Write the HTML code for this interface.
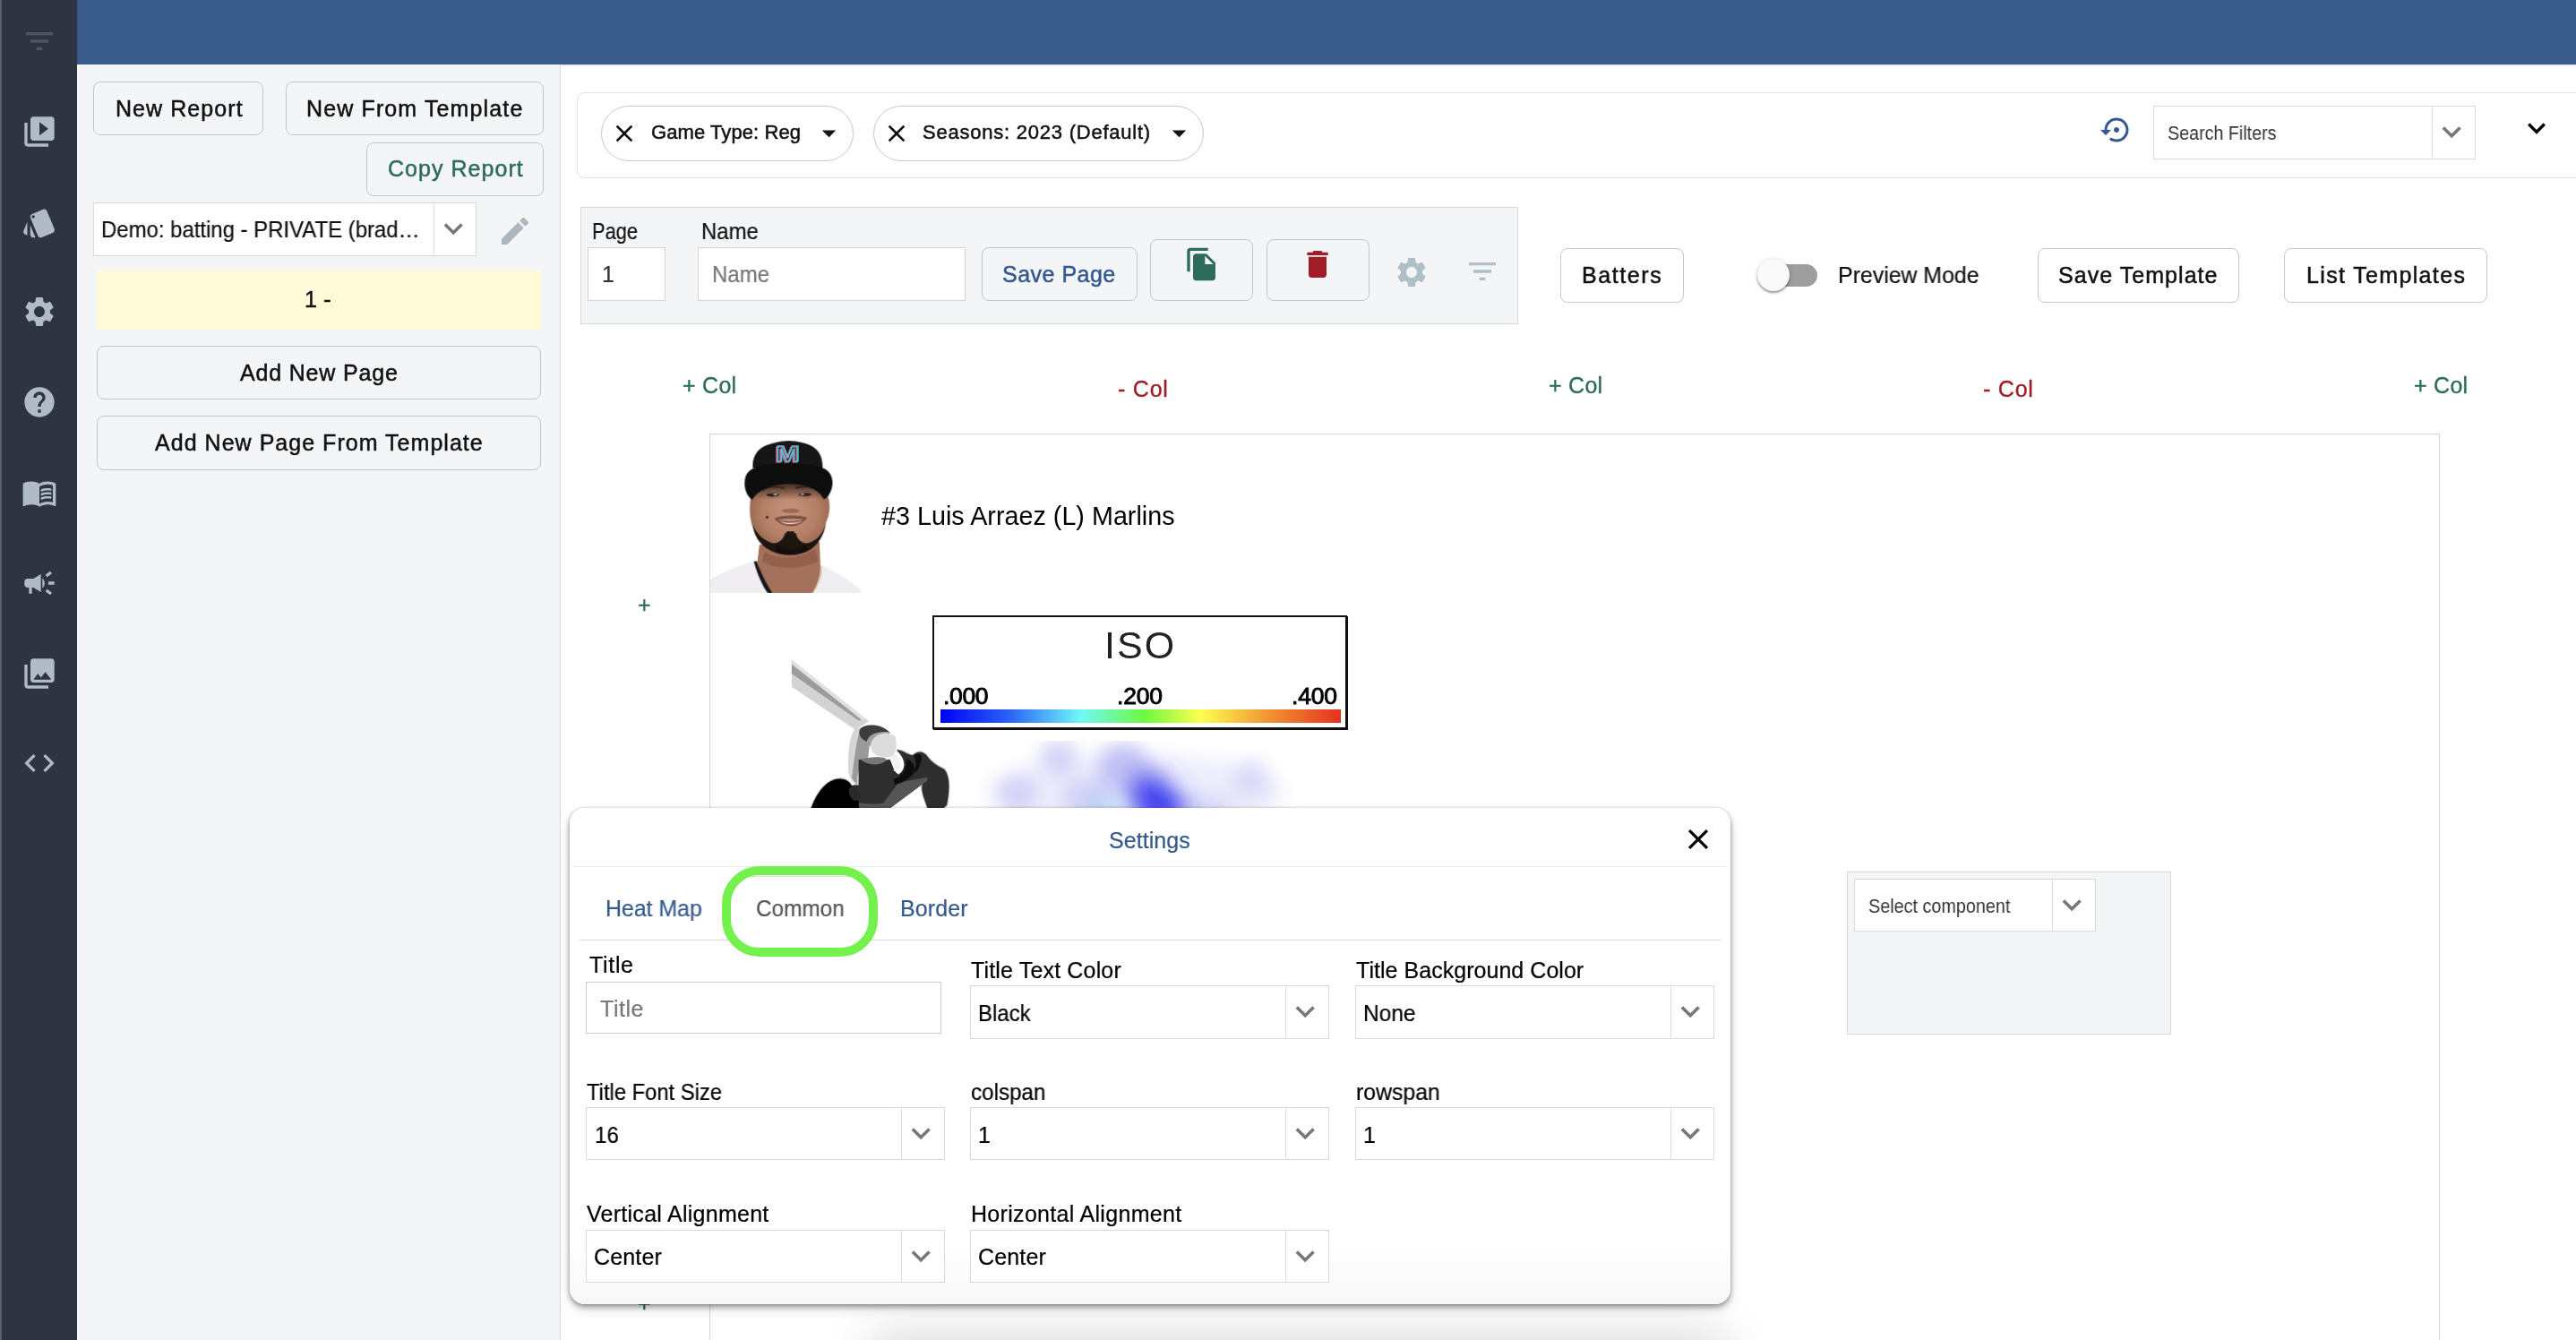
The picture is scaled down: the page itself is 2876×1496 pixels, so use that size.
<!DOCTYPE html>
<html lang="en"><head><meta charset="utf-8"><title>Report Builder</title>
<style>
html,body{margin:0;padding:0;background:#fff;}
body{width:2876px;height:1496px;overflow:hidden;position:relative;font-family:'Liberation Sans',sans-serif;}
.a{position:absolute;box-sizing:border-box;display:block}
.t{position:absolute;white-space:pre;line-height:1;font-family:'Liberation Sans',sans-serif;transform-origin:0 50%;will-change:transform}
.btn{border:1px solid #c6c6c6;border-radius:8px}
.sel{background:#fff;border:1px solid #d9d9d9}
</style></head>
<body>
<div class="a" style="left:0px;top:0px;width:86px;height:1496px;background:#2e3540"></div>
<div class="a" style="left:0px;top:0px;width:2px;height:1496px;background:#5a606b"></div>
<div class="a" style="left:86px;top:0px;width:2790px;height:72px;background:#385b8c;box-shadow:0 1px 2px rgba(0,0,0,.16)"></div>
<div class="a" style="left:86px;top:72px;width:539px;height:1424px;background:#f4f5f7;border-right:1px solid #d9d9d9;box-sizing:content-box"></div>
<svg class="a" style="left:24.4px;top:25.5px" width="40" height="40" viewBox="0 0 24 24"><path fill="#50565f" d="M10 18h4v-2h-4v2zM3 6v2h18V6H3zm3 7h12v-2H6v2z"/></svg>
<svg class="a" style="left:24.4px;top:126.5px" width="40" height="40" viewBox="0 0 24 24"><path fill="#b1bbc5" d="M4 6H2v14c0 1.1.9 2 2 2h14v-2H4V6zm16-4H8c-1.1 0-2 .9-2 2v12c0 1.1.9 2 2 2h12c1.1 0 2-.9 2-2V4c0-1.1-.9-2-2-2zm-8 12.5v-9l6 4.5-6 4.5z"/></svg>
<svg class="a" style="left:24.4px;top:229.0px" width="40" height="40" viewBox="0 0 24 24"><path fill="#b1bbc5" d="M2.53 19.65l1.34.56v-9.03l-2.43 5.86c-.41 1.02.08 2.19 1.09 2.61zm19.5-3.7L17.07 3.98c-.31-.75-1.04-1.21-1.81-1.23-.26 0-.53.04-.79.15L7.1 5.95c-.75.31-1.21 1.03-1.23 1.8-.01.27.04.54.15.8l4.96 11.97c.31.76 1.05 1.22 1.83 1.23.26 0 .52-.05.77-.15l7.36-3.05c1.02-.42 1.51-1.59 1.09-2.6zM7.88 8.75c-.55 0-1-.45-1-1s.45-1 1-1 1 .45 1 1-.45 1-1 1zm-2 11c0 1.1.9 2 2 2h1.45l-3.45-8.34v6.34z"/></svg>
<svg class="a" style="left:24.4px;top:328.0px" width="40" height="40" viewBox="0 0 24 24"><path fill="#b1bbc5" d="M19.14 12.94c.04-.3.06-.61.06-.94 0-.32-.02-.64-.07-.94l2.030-1.580c.18-.14.23-.41.12-.61l-1.920-3.320c-.12-.22-.37-.29-.59-.22l-2.390.960c-.5-.38-1.030-.7-1.620-.94l-.36-2.540c-.04-.24-.24-.41-.48-.41h-3.840c-.24 0-.43.17-.47.41l-.36 2.540c-.59.24-1.130.57-1.620.94l-2.390-.960c-.22-.08-.47 0-.59.22L2.740 8.870c-.12.21-.08.47.12.61l2.030 1.580c-.05.3-.09.63-.09.94s.02.64.07.94l-2.030 1.580c-.18.14-.23.41-.12.61l1.920 3.320c.12.22.37.29.59.22l2.390-.960c.5.38 1.030.7 1.620.94l.36 2.540c.05.24.24.41.48.41h3.840c.24 0 .44-.17.47-.41l.36-2.540c.59-.24 1.130-.56 1.620-.94l2.390.960c.22.08.47 0 .59-.22l1.920-3.320c.12-.22.07-.47-.12-.61l-2.010-1.580zM12 15.600c-1.980 0-3.600-1.620-3.600-3.600s1.620-3.600 3.600-3.600 3.600 1.620 3.600 3.600-1.620 3.600-3.600 3.600z"/></svg>
<svg class="a" style="left:24.4px;top:429.0px" width="40" height="40" viewBox="0 0 24 24"><path fill="#b1bbc5" d="M12 2C6.48 2 2 6.48 2 12s4.48 10 10 10 10-4.48 10-10S17.52 2 12 2zm1 17h-2v-2h2v2zm2.07-7.75l-.9.92C13.45 12.9 13 13.5 13 15h-2v-.5c0-1.1.45-2.1 1.17-2.83l1.24-1.26c.37-.36.59-.86.59-1.41 0-1.1-.9-2-2-2s-2 .9-2 2H8c0-2.21 1.79-4 4-4s4 1.79 4 4c0 .88-.36 1.68-.93 2.250z"/></svg>
<svg class="a" style="left:24.4px;top:529.8px" width="40" height="40" viewBox="0 0 24 24"><path fill="#b1bbc5" d="M21 5c-1.110-.35-2.330-.5-3.500-.5-1.950 0-4.050.4-5.500 1.500-1.450-1.100-3.550-1.500-5.500-1.500S2.450 4.900 1 6v14.650c0 .25.25.5.5.5.1 0 .15-.05.25-.05C3.100 20.450 5.050 20 6.500 20c1.950 0 4.050.4 5.500 1.500 1.350-.85 3.800-1.500 5.500-1.500 1.650 0 3.350.3 4.750 1.050.1.05.15.05.25.05.25 0 .5-.25.5-.5V6c-.6-.45-1.250-.75-2-1zm0 13.500c-1.100-.35-2.300-.5-3.500-.5-1.700 0-4.150.65-5.500 1.500V8c1.350-.85 3.800-1.500 5.500-1.500 1.200 0 2.400.15 3.500.5v11.500zM17.500 10.500c.88 0 1.730.09 2.500.26V9.240c-.79-.15-1.640-.24-2.500-.24-1.700 0-3.240.29-4.500.83v1.660c1.130-.64 2.700-.99 4.500-.99zM13 12.490v1.660c1.130-.64 2.700-.99 4.500-.99.88 0 1.730.09 2.500.26V11.900c-.79-.15-1.640-.24-2.500-.24-1.700 0-3.240.3-4.500.83zM17.500 14.330c-1.700 0-3.240.29-4.500.83v1.660c1.130-.64 2.700-.99 4.500-.99.88 0 1.730.09 2.500.26v-1.520c-.79-.16-1.640-.24-2.500-.24z"/></svg>
<svg class="a" style="left:24.4px;top:631.0px" width="40" height="40" viewBox="0 0 24 24"><path fill="#b1bbc5" d="M18 11v2h4v-2h-4zm-2 6.610c.96.71 2.210 1.650 3.200 2.390.4-.53.8-1.070 1.200-1.600-.99-.74-2.240-1.680-3.200-2.400-.4.54-.8 1.080-1.200 1.610zM20.400 5.600c-.4-.53-.8-1.070-1.200-1.600-.99.74-2.240 1.680-3.200 2.400.4.53.8 1.070 1.200 1.600.96-.72 2.210-1.650 3.200-2.400zM4 9c-1.100 0-2 .9-2 2v2c0 1.100.9 2 2 2h1v4h2v-4h1l5 3V6L8 9H4zm11.500 3c0-1.330-.58-2.530-1.500-3.350v6.690c.92-.81 1.500-2.010 1.500-3.340z"/></svg>
<svg class="a" style="left:24.4px;top:731.5px" width="40" height="40" viewBox="0 0 24 24"><path fill="#b1bbc5" d="M22 16V4c0-1.100-.9-2-2-2H8c-1.100 0-2 .9-2 2v12c0 1.100.9 2 2 2h12c1.100 0 2-.9 2-2zm-11-4l2.030 2.710L16 11l4 5H8l3-4zM2 6v14c0 1.100.9 2 2 2h14v-2H4V6H2z"/></svg>
<svg class="a" style="left:24.4px;top:832.0px" width="40" height="40" viewBox="0 0 24 24"><path fill="#b1bbc5" d="M9.4 16.6L4.8 12l4.6-4.6L8 6l-6 6 6 6 1.400-1.400zm5.200 0l4.600-4.600-4.600-4.600L16 6l6 6-6 6-1.400-1.400z"/></svg>
<div class="a btn" style="left:104px;top:91px;width:190px;height:60px;background:transparent"></div>
<div class="a btn" style="left:319px;top:91px;width:288px;height:60px;background:transparent"></div>
<div class="a btn" style="left:409px;top:159px;width:198px;height:60px;background:transparent"></div>
<div class="a sel" style="left:104px;top:226px;width:428px;height:60px;"></div><div class="a" style="left:483.5px;top:227px;width:1px;height:58px;background:#ddd"></div><svg class="a" style="left:484.8px;top:234.4px" width="42.4" height="42.4" viewBox="0 0 24 24"><path fill="#777" d="M16.590 8.590L12 13.170 7.410 8.590 6 10l6 6 6-6z"/></svg>
<svg class="a" style="left:555.0px;top:238.0px" width="40" height="40" viewBox="0 0 24 24"><path fill="#aeb7c0" d="M3 17.250V21h3.750L17.810 9.940l-3.750-3.750L3 17.250zM20.710 7.040c.39-.39.39-1.020 0-1.410l-2.340-2.340c-.39-.39-1.020-.39-1.410 0l-1.830 1.830 3.750 3.750 1.830-1.830z"/></svg>
<div class="a" style="left:108px;top:302px;width:496px;height:66px;background:#fffbd8"></div>
<div class="a btn" style="left:108px;top:386px;width:496px;height:60px;background:transparent"></div>
<div class="a btn" style="left:108px;top:464px;width:496px;height:61px;background:transparent"></div>
<div class="a" style="left:644px;top:103px;width:2300px;height:96px;border:1px solid #e4e4e4;border-radius:8px"></div>
<div class="a" style="left:671px;top:118px;width:281.5px;height:62px;border:1px solid #c9c9c9;border-radius:31px"></div>
<div class="a" style="left:975px;top:118px;width:368.6px;height:62px;border:1px solid #c9c9c9;border-radius:31px"></div>
<svg class="a" style="left:681.0px;top:133.0px" width="32" height="32" viewBox="0 0 24 24"><path fill="#111" d="M19 6.410L17.590 5 12 10.590 6.410 5 5 6.410 10.590 12 5 17.590 6.410 19 12 13.410 17.590 19 19 17.590 13.410 12z"/></svg>
<svg class="a" style="left:985.2px;top:133.0px" width="32" height="32" viewBox="0 0 24 24"><path fill="#111" d="M19 6.410L17.590 5 12 10.590 6.410 5 5 6.410 10.590 12 5 17.590 6.410 19 12 13.410 17.590 19 19 17.590 13.410 12z"/></svg>
<svg class="a" style="left:906.8px;top:129.7px" width="37" height="37" viewBox="0 0 24 24"><path fill="#111" d="M7 10l5 5 5-5z"/></svg>
<svg class="a" style="left:1298.0px;top:129.7px" width="37" height="37" viewBox="0 0 24 24"><path fill="#111" d="M7 10l5 5 5-5z"/></svg>
<svg class="a" style="left:2344.9px;top:127.0px" width="36" height="36" viewBox="0 0 24 24"><path fill="#34598c" d="M14 12c0-1.100-.9-2-2-2s-2 .9-2 2 .9 2 2 2 2-.9 2-2zm-2-9c-4.970 0-9 4.030-9 9H0l4 4 4-4H5c0-3.870 3.130-7 7-7s7 3.130 7 7-3.130 7-7 7c-1.510 0-2.910-.49-4.060-1.300l-1.420 1.440C8.040 20.300 9.940 21 12 21c4.970 0 9-4.030 9-9s-4.030-9-9-9z"/></svg>
<div class="a sel" style="left:2404px;top:118px;width:360px;height:60px;"></div><div class="a" style="left:2715.4px;top:119px;width:1px;height:58px;background:#ddd"></div><svg class="a" style="left:2716.3px;top:126.4px" width="42.4" height="42.4" viewBox="0 0 24 24"><path fill="#777" d="M16.590 8.590L12 13.170 7.410 8.590 6 10l6 6 6-6z"/></svg>
<svg class="a" style="left:2812.0px;top:123.2px" width="40" height="40" viewBox="0 0 24 24"><path fill="#000" d="M16.590 8.590L12 13.170 7.410 8.590 6 10l6 6 6-6z"/></svg>
<div class="a" style="left:648px;top:231px;width:1047px;height:131px;background:#f4f5f7;border:1px solid #d3d7de"></div>
<div class="a" style="left:656px;top:276px;width:87px;height:60px;background:#fff;border:1px solid #d4d4d4"></div>
<div class="a" style="left:779px;top:276px;width:299px;height:60px;background:#fff;border:1px solid #d4d4d4"></div>
<div class="a btn" style="left:1096px;top:275.5px;width:173.5px;height:60.0px;background:transparent"></div>
<div class="a btn" style="left:1284px;top:267px;width:114.59999999999991px;height:69px;background:transparent"></div>
<div class="a btn" style="left:1414px;top:267px;width:114.79999999999995px;height:69px;background:transparent"></div>
<svg class="a" style="left:1322.1px;top:275.3px" width="40" height="40" viewBox="0 0 24 24"><path fill="#2d6b5c" d="M16 1H4c-1.100 0-2 .9-2 2v14h2V3h12V1zm-1 4l6 6v10c0 1.100-.9 2-2 2H7.990C6.890 23 6 22.100 6 21l.010-14c0-1.100.89-2 1.990-2h7zm-1 7h5.500L14 6.500V12z"/></svg>
<svg class="a" style="left:1451.4px;top:275.0px" width="40" height="40" viewBox="0 0 24 24"><path fill="#a01c26" d="M6 19c0 1.100.9 2 2 2h8c1.100 0 2-.9 2-2V7H6v12zM19 4h-3.500l-1-1h-5l-1 1H5v2h14V4z"/></svg>
<svg class="a" style="left:1555.5px;top:283.5px" width="40" height="40" viewBox="0 0 24 24"><path fill="#b0bec5" d="M19.14 12.94c.04-.3.06-.61.06-.94 0-.32-.02-.64-.07-.94l2.030-1.580c.18-.14.23-.41.12-.61l-1.920-3.320c-.12-.22-.37-.29-.59-.22l-2.390.960c-.5-.38-1.030-.7-1.620-.94l-.36-2.540c-.04-.24-.24-.41-.48-.41h-3.840c-.24 0-.43.17-.47.41l-.36 2.540c-.59.24-1.130.57-1.620.94l-2.390-.960c-.22-.08-.47 0-.59.22L2.740 8.870c-.12.21-.08.47.12.61l2.030 1.580c-.05.3-.09.63-.09.94s.02.64.07.94l-2.030 1.580c-.18.14-.23.41-.12.61l1.920 3.320c.12.22.37.29.59.22l2.390-.960c.5.38 1.030.7 1.620.94l.36 2.540c.05.24.24.41.48.41h3.840c.24 0 .44-.17.47-.41l.36-2.540c.59-.24 1.130-.56 1.620-.94l2.390.960c.22.08.47 0 .59-.22l1.920-3.320c.12-.22.07-.47-.12-.61l-2.010-1.580zM12 15.600c-1.980 0-3.600-1.620-3.600-3.600s1.620-3.600 3.600-3.600 3.600 1.620 3.600 3.600-1.620 3.600-3.600 3.600z"/></svg>
<svg class="a" style="left:1634.7px;top:282.9px" width="40" height="40" viewBox="0 0 24 24"><path fill="#b0bec5" d="M10 18h4v-2h-4v2zM3 6v2h18V6H3zm3 7h12v-2H6v2z"/></svg>
<div class="a btn" style="left:1742px;top:277px;width:138px;height:61px;background:#fff"></div>
<div class="a" style="left:1967px;top:295px;width:62px;height:24.8px;background:#9e9e9e;border-radius:12.4px"></div>
<div class="a" style="left:1961.5px;top:288.6px;width:36.2px;height:36.2px;background:#fafafa;border-radius:50%;box-shadow:0 2px 2px rgba(0,0,0,.3),0 1px 5px rgba(0,0,0,.2)"></div>
<div class="a btn" style="left:2275px;top:277px;width:225px;height:61px;background:#fff"></div>
<div class="a btn" style="left:2550px;top:277px;width:227px;height:61px;background:#fff"></div>
<div class="a" style="left:792px;top:484px;width:1932px;height:1100px;border:1px solid #d5d7de"></div>
<svg class="a" style="left:793px;top:485px" width="168" height="177" viewBox="82 95 1072 1130" preserveAspectRatio="none">
<defs>
<radialGradient id="skin" cx="650" cy="640" r="360" gradientUnits="userSpaceOnUse"><stop offset="0" stop-color="#c8957c"/><stop offset=".55" stop-color="#b37f66"/><stop offset="1" stop-color="#8a5843"/></radialGradient>
<linearGradient id="capsh" x1="0" y1="440" x2="0" y2="560" gradientUnits="userSpaceOnUse"><stop offset="0" stop-color="#2a1a14" stop-opacity=".85"/><stop offset="1" stop-color="#2a1a14" stop-opacity="0"/></linearGradient>
<filter id="pb" x="-5%" y="-5%" width="110%" height="110%"><feGaussianBlur stdDeviation="5"/></filter>
<filter id="pb2" x="-10%" y="-10%" width="120%" height="120%"><feGaussianBlur stdDeviation="9"/></filter>
</defs>
<g filter="url(#pb)">
<path d="M82,1125 C200,1065 330,1012 405,998 L500,1225 L82,1225Z" fill="#f0edf3"/>
<path d="M870,1025 C980,1075 1100,1150 1160,1212 L1160,1225 L790,1225Z" fill="#f0edf3"/>
<path d="M432,880 L418,1000 C440,1100 470,1180 505,1225 L812,1225 C852,1150 872,1080 866,1020 L860,860Z" fill="#a4715b"/>
<path d="M470,930 C560,990 720,990 830,910 L850,1000 C720,1060 560,1060 450,1000Z" fill="#8b5a46" opacity=".7"/>
<path d="M392,1000 C418,1100 458,1180 490,1225 L525,1225 C482,1160 440,1080 414,998Z" fill="#17171a"/>
<path d="M868,1030 C880,1090 850,1170 808,1225" fill="none" stroke="#c7a468" stroke-width="7"/>
<path d="M368,560 C356,640 368,720 388,762 C400,830 440,882 520,922 C600,962 705,962 782,912 C852,872 892,800 906,722 C928,680 938,620 927,560 C900,470 800,430 650,430 C500,430 398,470 368,560Z" fill="url(#skin)"/>
<path d="M368,440 L930,440 L930,600 L368,600Z" fill="url(#capsh)"/>
<path d="M383,735 C398,838 450,900 540,936 C620,966 720,961 792,916 C852,880 892,810 907,726 C885,800 842,852 782,868 C742,878 702,850 692,800 L652,786 L614,800 C600,850 560,880 520,868 C460,850 408,800 383,735Z" fill="#1b1411"/>
<path d="M560,880 C620,930 700,930 760,880 L770,920 C700,960 610,960 545,920Z" fill="#120d0b"/>
<path d="M628,786 L678,786 L694,880 L606,880Z" fill="#1b1411"/>
<path d="M540,692 C600,668 700,668 768,686 L764,704 C700,692 600,692 546,708Z" fill="#5e3c30" opacity=".75"/>
<path d="M545,700 C600,722 700,722 762,696 C722,762 600,768 545,700Z" fill="#80463a"/>
<path d="M572,712 C620,730 690,730 740,711 C700,742 620,745 572,712Z" fill="#ebe3df"/>
<ellipse cx="655" cy="640" rx="62" ry="17" fill="#7d4f3c" opacity=".6"/>
<ellipse cx="527" cy="526" rx="46" ry="12" fill="#2e211c"/>
<ellipse cx="757" cy="523" rx="46" ry="12" fill="#2e211c"/>
<ellipse cx="545" cy="524" rx="14" ry="7" fill="#b9b2ac"/>
<ellipse cx="738" cy="521" rx="14" ry="7" fill="#9fb0b2"/>
<path d="M452,492 C500,462 570,462 612,480" fill="none" stroke="#33241d" stroke-width="13"/>
<path d="M690,478 C740,460 810,462 852,490" fill="none" stroke="#33241d" stroke-width="13"/>
<circle cx="487" cy="685" r="9" fill="#2a1c16"/>
<path d="M385,335 C378,250 420,182 520,160 C600,135 682,135 762,160 C852,186 884,250 882,335Z" fill="#121214"/>
<path d="M328,430 C328,380 358,346 400,334 C500,300 780,300 882,334 C932,350 957,400 952,452 C947,502 922,542 892,557 C852,482 760,448 640,448 C520,448 420,490 380,562 C340,530 323,480 328,430Z" fill="#0b0b0d"/>
</g>
<g font-family="'Liberation Sans',sans-serif" font-weight="700" font-size="150" text-anchor="middle" fill="none" stroke-linejoin="round">
<text x="626" y="290" stroke="#d9577f" stroke-width="9" textLength="170" lengthAdjust="spacingAndGlyphs">M</text>
<text x="634" y="286" stroke="#52bfd3" stroke-width="9" textLength="170" lengthAdjust="spacingAndGlyphs">M</text>
</g>
</svg>

<svg class="a" style="left:870px;top:720px" width="230" height="182" viewBox="0 0 1622.6 1284" preserveAspectRatio="none">
<defs><filter id="bb" x="-5%" y="-5%" width="110%" height="110%"><feGaussianBlur stdDeviation="3"/></filter></defs>
<g filter="url(#bb)">
<g fill="none" stroke="#bdbdbd" stroke-width="16" stroke-linejoin="round">
<path d="M250,1290 C300,1150 380,1060 470,1055 C520,1050 560,1080 570,1110"/>
<path d="M925,830 C960,820 1000,860 1050,870 C1090,840 1120,830 1160,870 C1200,930 1260,960 1300,980 C1350,1040 1340,1150 1320,1260 L1290,1290 L1170,1290 C1140,1200 1110,1140 1130,1090"/>
</g>
<path d="M98,118 L705,602 L600,668 L98,330Z" fill="#d3d3d3"/>
<path d="M98,116 L705,600 L645,588 L98,152Z" fill="#e0e0e0"/>
<path d="M98,152 L645,588 L628,598 L98,226Z" fill="#9c9c9c"/>
<path d="M600,660 C555,700 538,850 545,1000 C560,1080 600,1112 640,1100 L650,900 C610,800 625,700 705,640Z" fill="#d6d6d6"/>
<path d="M645,650 C603,750 592,900 572,1050 L612,1100 C612,1000 640,930 700,885 L722,700Z" fill="#9a9a9a"/>
<path d="M640,960 C620,1000 610,1050 625,1090 C650,1050 655,1000 650,950Z" fill="#e4e4e4"/>
<path d="M630,680 C640,620 800,608 872,692 C800,680 722,700 690,762 C650,742 630,722 630,680Z" fill="#3d3d3d"/>
<path d="M690,762 C700,700 790,672 872,692 L860,720 C790,700 730,740 720,800Z" fill="#a0a0a0"/>
<path d="M625,905 C700,890 800,930 870,900 C900,960 900,1000 940,1020 C1000,980 1000,900 925,830 C960,820 1000,860 1050,870 C1090,840 1120,830 1160,870 C1200,930 1260,960 1300,980 C1350,1040 1340,1150 1320,1260 L1290,1290 L1170,1290 C1140,1200 1110,1140 1130,1090 L1160,1050 L870,1290 L620,1290 C600,1200 560,1180 550,1140 C560,1100 600,1100 625,1105Z" fill="#2d2d2d"/>
<path d="M640,905 C720,960 800,950 850,905 L830,890 C780,880 700,880 640,905Z" fill="#777"/>
<path d="M600,1240 C680,1255 760,1255 820,1245 L940,1085 L1160,1042 L1172,1066 L870,1290 L620,1290Z" fill="#555"/>
<path d="M900,1060 C960,1040 1010,980 1000,900 C1040,900 1080,960 1060,1010 C1020,1060 960,1090 910,1100Z" fill="#0d0d0d"/>
<path d="M1060,870 C1100,850 1130,860 1120,900 C1110,960 1090,1000 1060,1010 C1080,960 1080,910 1060,870Z" fill="#111"/>
<path d="M720,790 C730,700 850,668 912,720 C932,780 922,850 892,882 C800,892 720,870 720,790Z" fill="#dcdcdc"/>
<path d="M880,878 C900,920 912,960 900,992 C942,1002 962,960 952,920 L922,858Z" fill="#f2f2f2"/>
<path d="M250,1290 C300,1150 380,1060 470,1055 C520,1050 560,1080 570,1110 C600,1180 640,1240 625,1290Z" fill="#000"/>
<path d="M550,1130 C580,1100 620,1120 630,1170 C640,1220 610,1240 580,1220 C555,1200 545,1160 550,1130Z" fill="#2a2a2a"/>
</g>
</svg>
<svg class="a" style="left:1060px;top:827px" width="460" height="75" viewBox="1060 827 460 75">
<defs><filter id="hb" x="-20%" y="-60%" width="140%" height="220%"><feGaussianBlur stdDeviation="10"/></filter>
<filter id="hb2" x="-20%" y="-60%" width="140%" height="220%"><feGaussianBlur stdDeviation="12"/></filter></defs>
<g filter="url(#hb)">
<ellipse cx="1268" cy="885" rx="165" ry="42" fill="#ededfc"/>
<circle cx="1182" cy="846" r="21" fill="#d4d4f8"/>
<ellipse cx="1254" cy="856" rx="30" ry="26" fill="#c2c2f5"/>
<circle cx="1136" cy="886" r="22" fill="#d2d2f7"/>
<circle cx="1396" cy="870" r="21" fill="#dadaf9"/>
<ellipse cx="1215" cy="890" rx="30" ry="20" fill="#d0d0f7"/>
<ellipse cx="1345" cy="900" rx="30" ry="12" fill="#d4d4f8"/>
</g>
<g filter="url(#hb2)">
<ellipse cx="1284" cy="886" rx="26" ry="24" fill="#5a5af0" transform="rotate(35 1284 886)"/>
<ellipse cx="1296" cy="900" rx="28" ry="16" fill="#2f2fee"/>
<ellipse cx="1231" cy="905" rx="16" ry="7" fill="#8fd4f5"/>
</g>
</svg>

<div class="a" style="left:1041px;top:687px;width:463px;height:127px;border:2px solid #111;background:#fff;box-shadow:1px 1px 0 #111"></div>
<div class="a" style="left:1050px;top:792px;width:447px;height:15.4px;background:linear-gradient(90deg,#0000f5 0%,#2a62f6 17%,#70f8f8 35%,#6ef840 51%,#ffff50 65%,#f09432 82%,#e83020 100%)"></div>
<div class="a" style="left:2062px;top:973px;width:362px;height:181.5px;background:#f4f5f7;border:1px solid #d5d7df"></div>
<div class="a sel" style="left:2070.4px;top:981.2px;width:269.1999999999998px;height:58.799999999999955px;"></div><div class="a" style="left:2291.2px;top:982.2px;width:1px;height:56.799999999999955px;background:#ddd"></div><svg class="a" style="left:2292.3px;top:989.0px" width="42.4" height="42.4" viewBox="0 0 24 24"><path fill="#777" d="M16.590 8.590L12 13.170 7.410 8.590 6 10l6 6 6-6z"/></svg>
<span class="t" style="left:128.6px;top:108.9px;font-size:25px;color:#111;letter-spacing:1.07px;-webkit-text-stroke:0.5px;">New Report</span>
<span class="t" style="left:342.2px;top:108.9px;font-size:25px;color:#111;letter-spacing:1.13px;-webkit-text-stroke:0.5px;">New From Template</span>
<span class="t" style="left:432.8px;top:176.4px;font-size:25px;color:#2d6b5c;letter-spacing:1.04px;-webkit-text-stroke:0.5px;">Copy Report</span>
<span class="t" style="left:113.1px;top:244.4px;font-size:25px;color:#111;transform:scaleX(0.9572);-webkit-text-stroke:0.22px;">Demo: batting - PRIVATE (brad…</span>
<span class="t" style="left:340.0px;top:322.0px;font-size:25px;color:#111;letter-spacing:0.16px;-webkit-text-stroke:0.5px;">1 -</span>
<span class="t" style="left:267.5px;top:403.9px;font-size:25px;color:#111;letter-spacing:0.82px;-webkit-text-stroke:0.5px;">Add New Page</span>
<span class="t" style="left:172.5px;top:481.9px;font-size:25px;color:#111;letter-spacing:1.03px;-webkit-text-stroke:0.5px;">Add New Page From Template</span>
<span class="t" style="left:726.5px;top:137.0px;font-size:22px;color:#111;letter-spacing:0.08px;-webkit-text-stroke:0.5px;">Game Type: Reg</span>
<span class="t" style="left:1030.2px;top:137.0px;font-size:22px;color:#111;letter-spacing:0.77px;-webkit-text-stroke:0.5px;">Seasons: 2023 (Default)</span>
<span class="t" style="left:2419.9px;top:138.3px;font-size:22px;color:#333;transform:scaleX(0.8945);">Search Filters</span>
<span class="t" style="left:661.4px;top:246.4px;font-size:25px;color:#111;transform:scaleX(0.8739);-webkit-text-stroke:0.22px;">Page</span>
<span class="t" style="left:783.1px;top:246.4px;font-size:25px;color:#111;transform:scaleX(0.9564);-webkit-text-stroke:0.22px;">Name</span>
<span class="t" style="left:672.4px;top:294.0px;font-size:25px;color:#333;-webkit-text-stroke:0.22px;">1</span>
<span class="t" style="left:795.1px;top:294.0px;font-size:25px;color:#777;transform:scaleX(0.9601);-webkit-text-stroke:0.22px;">Name</span>
<span class="t" style="left:1119.0px;top:293.5px;font-size:25px;color:#34598c;letter-spacing:0.49px;-webkit-text-stroke:0.5px;">Save Page</span>
<span class="t" style="left:1766.2px;top:294.6px;font-size:25px;color:#111;letter-spacing:1.58px;-webkit-text-stroke:0.5px;">Batters</span>
<span class="t" style="left:2051.8px;top:294.6px;font-size:25px;color:#111;transform:scaleX(0.9948);-webkit-text-stroke:0.22px;">Preview Mode</span>
<span class="t" style="left:2298.2px;top:294.6px;font-size:25px;color:#111;letter-spacing:1.05px;-webkit-text-stroke:0.5px;">Save Template</span>
<span class="t" style="left:2575.2px;top:294.6px;font-size:25px;color:#111;letter-spacing:1.35px;-webkit-text-stroke:0.5px;">List Templates</span>
<span class="t" style="left:762.2px;top:417.7px;font-size:25px;color:#2d6b5c;letter-spacing:0.27px;-webkit-text-stroke:0.35px;">+ Col</span>
<span class="t" style="left:1728.7px;top:417.7px;font-size:25px;color:#2d6b5c;letter-spacing:0.27px;-webkit-text-stroke:0.35px;">+ Col</span>
<span class="t" style="left:2695.2px;top:417.7px;font-size:25px;color:#2d6b5c;letter-spacing:0.27px;-webkit-text-stroke:0.35px;">+ Col</span>
<span class="t" style="left:1247.7px;top:421.9px;font-size:25px;color:#a01c26;letter-spacing:0.78px;-webkit-text-stroke:0.35px;">- Col</span>
<span class="t" style="left:2213.7px;top:421.9px;font-size:25px;color:#a01c26;letter-spacing:0.78px;-webkit-text-stroke:0.35px;">- Col</span>
<span class="t" style="left:983.8px;top:562.0px;font-size:28.7px;color:#000;letter-spacing:0.03px;">#3 Luis Arraez (L) Marlins</span>
<span class="t" style="left:712.2px;top:663.3px;font-size:25px;color:#2d6b5c;-webkit-text-stroke:0.3px;">+</span>
<span class="t" style="left:712.2px;top:1443.1px;font-size:25px;color:#2d6b5c;-webkit-text-stroke:0.3px;">+</span>
<span class="t" style="left:1233.3px;top:699.2px;font-size:43px;color:#222;letter-spacing:2.01px;">ISO</span>
<span class="t" style="left:1053.0px;top:764.3px;font-size:26.5px;color:#000;letter-spacing:-0.33px;-webkit-text-stroke:0.9px;">.000</span>
<span class="t" style="left:1247.2px;top:764.3px;font-size:26.5px;color:#000;letter-spacing:-0.23px;-webkit-text-stroke:0.9px;">.200</span>
<span class="t" style="left:1442.0px;top:764.3px;font-size:26.5px;color:#000;letter-spacing:-0.19px;-webkit-text-stroke:0.9px;">.400</span>
<span class="t" style="left:2085.6px;top:1000.6px;font-size:22px;color:#333;transform:scaleX(0.8994);">Select component</span>
<div class="a" style="left:965px;top:1484px;width:970px;height:70px;background:rgba(0,0,0,.12);filter:blur(24px);border-radius:40px"></div>
<div class="a" style="left:636px;top:902px;width:1296px;height:553.5px;background:linear-gradient(180deg,#fff 0,#fff 88%,#f7f7f7 100%);border-radius:17px;box-shadow:0 3px 6px rgba(0,0,0,.38),0 6px 14px rgba(0,0,0,.12),0 0 3px rgba(0,0,0,.15)"></div>
<div class="a" style="left:639px;top:967px;width:1289px;height:1px;background:#ececec"></div>
<svg class="a" style="left:1877.0px;top:918.0px" width="38" height="38" viewBox="0 0 24 24"><path fill="#000" d="M19 6.410L17.590 5 12 10.590 6.410 5 5 6.410 10.590 12 5 17.590 6.410 19 12 13.410 17.590 19 19 17.590 13.410 12z"/></svg>
<div class="a" style="left:647px;top:1049px;width:1274px;height:1px;background:#d8d8d8"></div>
<div class="a" style="left:815px;top:977.5px;width:156.5px;height:73px;border:1px solid #e0e0e0;border-bottom:none;border-radius:9px 9px 0 0;background:#fff"></div>
<div class="a" style="left:806px;top:967px;width:174px;height:101px;border:10.5px solid #75f14e;border-radius:42px"></div>
<div class="a" style="left:654px;top:1095.5px;width:397px;height:58px;background:#fff;border:1px solid #ccc"></div>
<div class="a sel" style="left:1083px;top:1100.4px;width:401px;height:59.200000000000045px;"></div><div class="a" style="left:1435px;top:1101.4px;width:1px;height:57.200000000000045px;background:#ddd"></div><svg class="a" style="left:1436.2px;top:1108.4px" width="42.4" height="42.4" viewBox="0 0 24 24"><path fill="#777" d="M16.590 8.590L12 13.170 7.410 8.590 6 10l6 6 6-6z"/></svg>
<div class="a sel" style="left:1513px;top:1100.4px;width:401.4000000000001px;height:59.200000000000045px;"></div><div class="a" style="left:1865px;top:1101.4px;width:1px;height:57.200000000000045px;background:#ddd"></div><svg class="a" style="left:1866.2px;top:1108.4px" width="42.4" height="42.4" viewBox="0 0 24 24"><path fill="#777" d="M16.590 8.590L12 13.170 7.410 8.590 6 10l6 6 6-6z"/></svg>
<div class="a sel" style="left:654px;top:1236.2px;width:401px;height:59.200000000000045px;"></div><div class="a" style="left:1006px;top:1237.2px;width:1px;height:57.200000000000045px;background:#ddd"></div><svg class="a" style="left:1007.2px;top:1244.2px" width="42.4" height="42.4" viewBox="0 0 24 24"><path fill="#777" d="M16.590 8.590L12 13.170 7.410 8.590 6 10l6 6 6-6z"/></svg>
<div class="a sel" style="left:1083px;top:1236.2px;width:401px;height:59.200000000000045px;"></div><div class="a" style="left:1435px;top:1237.2px;width:1px;height:57.200000000000045px;background:#ddd"></div><svg class="a" style="left:1436.2px;top:1244.2px" width="42.4" height="42.4" viewBox="0 0 24 24"><path fill="#777" d="M16.590 8.590L12 13.170 7.410 8.590 6 10l6 6 6-6z"/></svg>
<div class="a sel" style="left:1513px;top:1236.2px;width:401.4000000000001px;height:59.200000000000045px;"></div><div class="a" style="left:1865px;top:1237.2px;width:1px;height:57.200000000000045px;background:#ddd"></div><svg class="a" style="left:1866.2px;top:1244.2px" width="42.4" height="42.4" viewBox="0 0 24 24"><path fill="#777" d="M16.590 8.590L12 13.170 7.410 8.590 6 10l6 6 6-6z"/></svg>
<div class="a sel" style="left:654px;top:1373.4px;width:401px;height:58.59999999999991px;"></div><div class="a" style="left:1006px;top:1374.4px;width:1px;height:56.59999999999991px;background:#ddd"></div><svg class="a" style="left:1007.2px;top:1381.1px" width="42.4" height="42.4" viewBox="0 0 24 24"><path fill="#777" d="M16.590 8.590L12 13.170 7.410 8.590 6 10l6 6 6-6z"/></svg>
<div class="a sel" style="left:1083px;top:1373.4px;width:401px;height:58.59999999999991px;"></div><div class="a" style="left:1435px;top:1374.4px;width:1px;height:56.59999999999991px;background:#ddd"></div><svg class="a" style="left:1436.2px;top:1381.1px" width="42.4" height="42.4" viewBox="0 0 24 24"><path fill="#777" d="M16.590 8.590L12 13.170 7.410 8.590 6 10l6 6 6-6z"/></svg>
<span class="t" style="left:1238.1px;top:925.8px;font-size:25px;color:#34598c;letter-spacing:0.06px;-webkit-text-stroke:0.22px;">Settings</span>
<span class="t" style="left:675.6px;top:1002.0px;font-size:25px;color:#34598c;transform:scaleX(0.9944);-webkit-text-stroke:0.22px;">Heat Map</span>
<span class="t" style="left:844.1px;top:1002.0px;font-size:25px;color:#555;transform:scaleX(0.9740);-webkit-text-stroke:0.22px;">Common</span>
<span class="t" style="left:1004.9px;top:1002.0px;font-size:25px;color:#34598c;letter-spacing:0.10px;-webkit-text-stroke:0.22px;">Border</span>
<span class="t" style="left:658.1px;top:1064.5px;font-size:25px;color:#000;letter-spacing:0.68px;-webkit-text-stroke:0.22px;">Title</span>
<span class="t" style="left:669.9px;top:1114.0px;font-size:25px;color:#777;letter-spacing:0.55px;-webkit-text-stroke:0.22px;">Title</span>
<span class="t" style="left:1083.6px;top:1070.6px;font-size:25px;color:#000;letter-spacing:0.16px;-webkit-text-stroke:0.22px;">Title Text Color</span>
<span class="t" style="left:1092.4px;top:1118.5px;font-size:25px;color:#000;transform:scaleX(0.9573);-webkit-text-stroke:0.22px;">Black</span>
<span class="t" style="left:1513.6px;top:1070.6px;font-size:25px;color:#000;letter-spacing:0.04px;-webkit-text-stroke:0.22px;">Title Background Color</span>
<span class="t" style="left:1522.3px;top:1118.5px;font-size:25px;color:#000;transform:scaleX(0.9802);-webkit-text-stroke:0.22px;">None</span>
<span class="t" style="left:654.9px;top:1206.6px;font-size:25px;color:#000;transform:scaleX(0.9504);-webkit-text-stroke:0.22px;">Title Font Size</span>
<span class="t" style="left:663.6px;top:1254.8px;font-size:25px;color:#000;transform:scaleX(0.9629);-webkit-text-stroke:0.22px;">16</span>
<span class="t" style="left:1083.5px;top:1206.6px;font-size:25px;color:#000;transform:scaleX(0.9676);-webkit-text-stroke:0.22px;">colspan</span>
<span class="t" style="left:1091.8px;top:1254.8px;font-size:25px;color:#000;-webkit-text-stroke:0.22px;">1</span>
<span class="t" style="left:1513.6px;top:1206.6px;font-size:25px;color:#000;transform:scaleX(0.9924);-webkit-text-stroke:0.22px;">rowspan</span>
<span class="t" style="left:1521.8px;top:1254.8px;font-size:25px;color:#000;-webkit-text-stroke:0.22px;">1</span>
<span class="t" style="left:654.6px;top:1343.0px;font-size:25px;color:#000;letter-spacing:0.27px;-webkit-text-stroke:0.22px;">Vertical Alignment</span>
<span class="t" style="left:662.6px;top:1391.4px;font-size:25px;color:#000;letter-spacing:0.15px;-webkit-text-stroke:0.22px;">Center</span>
<span class="t" style="left:1084.1px;top:1343.0px;font-size:25px;color:#000;letter-spacing:0.31px;-webkit-text-stroke:0.22px;">Horizontal Alignment</span>
<span class="t" style="left:1092.1px;top:1391.4px;font-size:25px;color:#000;letter-spacing:0.15px;-webkit-text-stroke:0.22px;">Center</span>
</body></html>
